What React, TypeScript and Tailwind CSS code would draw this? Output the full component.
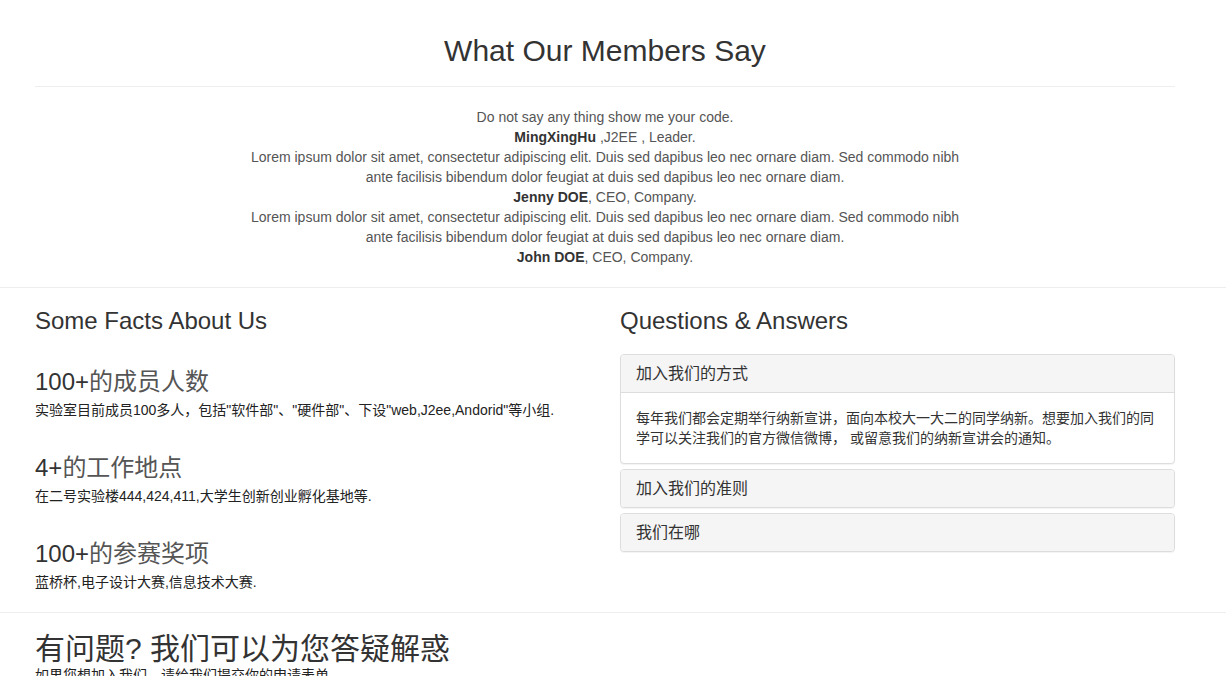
import React from "react";

const font = { fontFamily: '"Liberation Sans", Arial, "Noto Sans CJK SC", sans-serif' };

function Panel({ title, body }: { title: string; body?: string }) {
  return (
    <div className="border border-[#ddd] rounded-[4px] shadow-[0_1px_1px_rgba(0,0,0,0.05)] bg-white overflow-hidden">
      <div className="bg-[#f5f5f5] px-[15px] py-[10px] text-[16px] leading-[17px] text-[#333]">{title}</div>
      {body && (
        <div className="border-t border-[#ddd] p-[15px] text-[14px] leading-[20px] text-[#333]">{body}</div>
      )}
    </div>
  );
}

function Fact({ num, label, desc }: { num: string; label: string; desc: string }) {
  return (
    <div>
      <h3 className="text-[24px] leading-[26px] text-[#333]">
        {num}
        <span className="text-[#555]">{label}</span>
      </h3>
      <p className="mt-[5px] text-[14px] leading-[20px] text-[#222]">{desc}</p>
    </div>
  );
}

export default function App() {
  return (
    <div className="bg-white min-h-screen overflow-hidden" style={font}>
      {/* Members section */}
      <section className="px-[35px] pt-[34px] pb-[20px]">
        <div className="w-[1140px]">
          <h2 className="text-center text-[30px] leading-[33px] text-[#333]">What Our Members Say</h2>
          <hr className="mt-[19px] mb-[20px] border-0 border-t border-[#eee]" />
          <div className="mx-auto w-[726px] text-center text-[14px] leading-[20px] text-[#555]">
            <p>Do not say any thing show me your code.</p>
            <p>
              <b className="text-[#333]">MingXingHu</b> ,J2EE , Leader.
            </p>
            <p>
              Lorem ipsum dolor sit amet, consectetur adipiscing elit. Duis sed dapibus leo nec ornare diam. Sed commodo
              nibh ante facilisis bibendum dolor feugiat at duis sed dapibus leo nec ornare diam.
            </p>
            <p>
              <b className="text-[#333]">Jenny DOE</b>, CEO, Company.
            </p>
            <p>
              Lorem ipsum dolor sit amet, consectetur adipiscing elit. Duis sed dapibus leo nec ornare diam. Sed commodo
              nibh ante facilisis bibendum dolor feugiat at duis sed dapibus leo nec ornare diam.
            </p>
            <p>
              <b className="text-[#333]">John DOE</b>, CEO, Company.
            </p>
          </div>
        </div>
      </section>

      <hr className="border-0 border-t border-[#eee]" />

      {/* Facts & QA */}
      <section className="px-[35px] pt-[20px] pb-[20px]">
        <div className="w-[1140px] grid grid-cols-2 gap-x-[30px]">
          <div>
            <h3 className="text-[24px] leading-[26px] text-[#333]">Some Facts About Us</h3>
            <div className="mt-[35px] flex flex-col gap-[35px]">
              <Fact
                num="100+"
                label="的成员人数"
                desc={'实验室目前成员100多人，包括"软件部"、"硬件部"、下设"web,J2ee,Andorid"等小组.'}
              />
              <Fact num="4+" label="的工作地点" desc="在二号实验楼444,424,411,大学生创新创业孵化基地等." />
              <Fact num="100+" label="的参赛奖项" desc="蓝桥杯,电子设计大赛,信息技术大赛." />
            </div>
          </div>
          <div>
            <h3 className="text-[24px] leading-[26px] text-[#333]">Questions &amp; Answers</h3>
            <div className="mt-[20px] flex flex-col gap-[5px]">
              <Panel
                title="加入我们的方式"
                body="每年我们都会定期举行纳新宣讲，面向本校大一大二的同学纳新。想要加入我们的同学可以关注我们的官方微信微博， 或留意我们的纳新宣讲会的通知。"
              />
              <Panel title="加入我们的准则" />
              <Panel title="我们在哪" />
            </div>
          </div>
        </div>
      </section>

      <hr className="border-0 border-t border-[#eee]" />

      <section className="px-[35px] pt-[19px]">
        <h2 className="text-[30px] leading-[33px] text-[#333]">有问题? 我们可以为您答疑解惑</h2>
        <p className="text-[14px] leading-[20px] text-[#222]">如果您想加入我们，请给我们提交你的申请表单</p>
      </section>
    </div>
  );
}
